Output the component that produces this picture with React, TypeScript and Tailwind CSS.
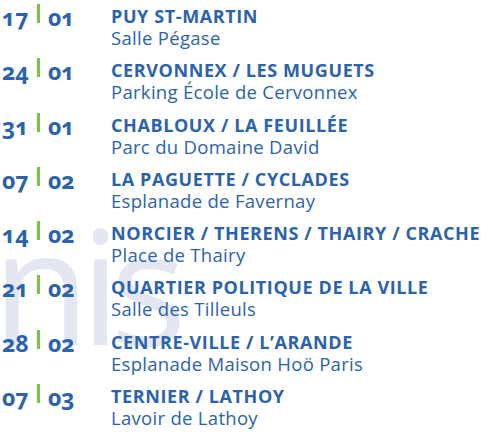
import React from "react";

const events = [
  { day: "17", month: "01", title: "PUY ST-MARTIN", place: "Salle Pégase" },
  { day: "24", month: "01", title: "CERVONNEX / LES MUGUETS", place: "Parking École de Cervonnex" },
  { day: "31", month: "01", title: "CHABLOUX / LA FEUILLÉE", place: "Parc du Domaine David" },
  { day: "07", month: "02", title: "LA PAGUETTE / CYCLADES", place: "Esplanade de Favernay" },
  { day: "14", month: "02", title: "NORCIER / THERENS / THAIRY / CRACHE", place: "Place de Thairy" },
  { day: "21", month: "02", title: "QUARTIER POLITIQUE DE LA VILLE", place: "Salle des Tilleuls" },
  { day: "28", month: "02", title: "CENTRE-VILLE / L’ARANDE", place: "Esplanade Maison Hoö Paris" },
  { day: "07", month: "03", title: "TERNIER / LATHOY", place: "Lavoir de Lathoy" },
];

export default function App() {
  return (
    <div
      className="relative w-[489px] h-[434px] overflow-hidden bg-white text-[#2b63ad]"
      style={{ fontFamily: '"Open Sans", "Noto Sans", sans-serif' }}
    >
      {/* faint watermark behind the list */}
      <div className="absolute left-[-8px] top-[203px] text-[160px] leading-[160px] tracking-[-10px] text-[#e4e7f2] select-none">
        nis
      </div>

      <ul className="relative pt-[6px]">
        {events.map((e, i) => (
          <li key={i} className="flex h-[54.3px]">
            <div className="flex items-start w-[111px] pl-[2px] shrink-0">
              <span className="w-[35px] text-[23px] leading-[22px] font-bold oldstyle-nums">{e.day}</span>
              <span className="w-[3px] h-[19px] mt-[-2px] bg-[#7cc243]"></span>
              <span className="ml-[8px] text-[23px] leading-[22px] font-bold oldstyle-nums">{e.month}</span>
            </div>
            <div>
              <div className="text-[18px] leading-[21px] tracking-[0.6px] font-bold whitespace-nowrap">{e.title}</div>
              <div className="text-[18.5px] leading-[22px] tracking-[0.3px] whitespace-nowrap">{e.place}</div>
            </div>
          </li>
        ))}
      </ul>
    </div>
  );
}
